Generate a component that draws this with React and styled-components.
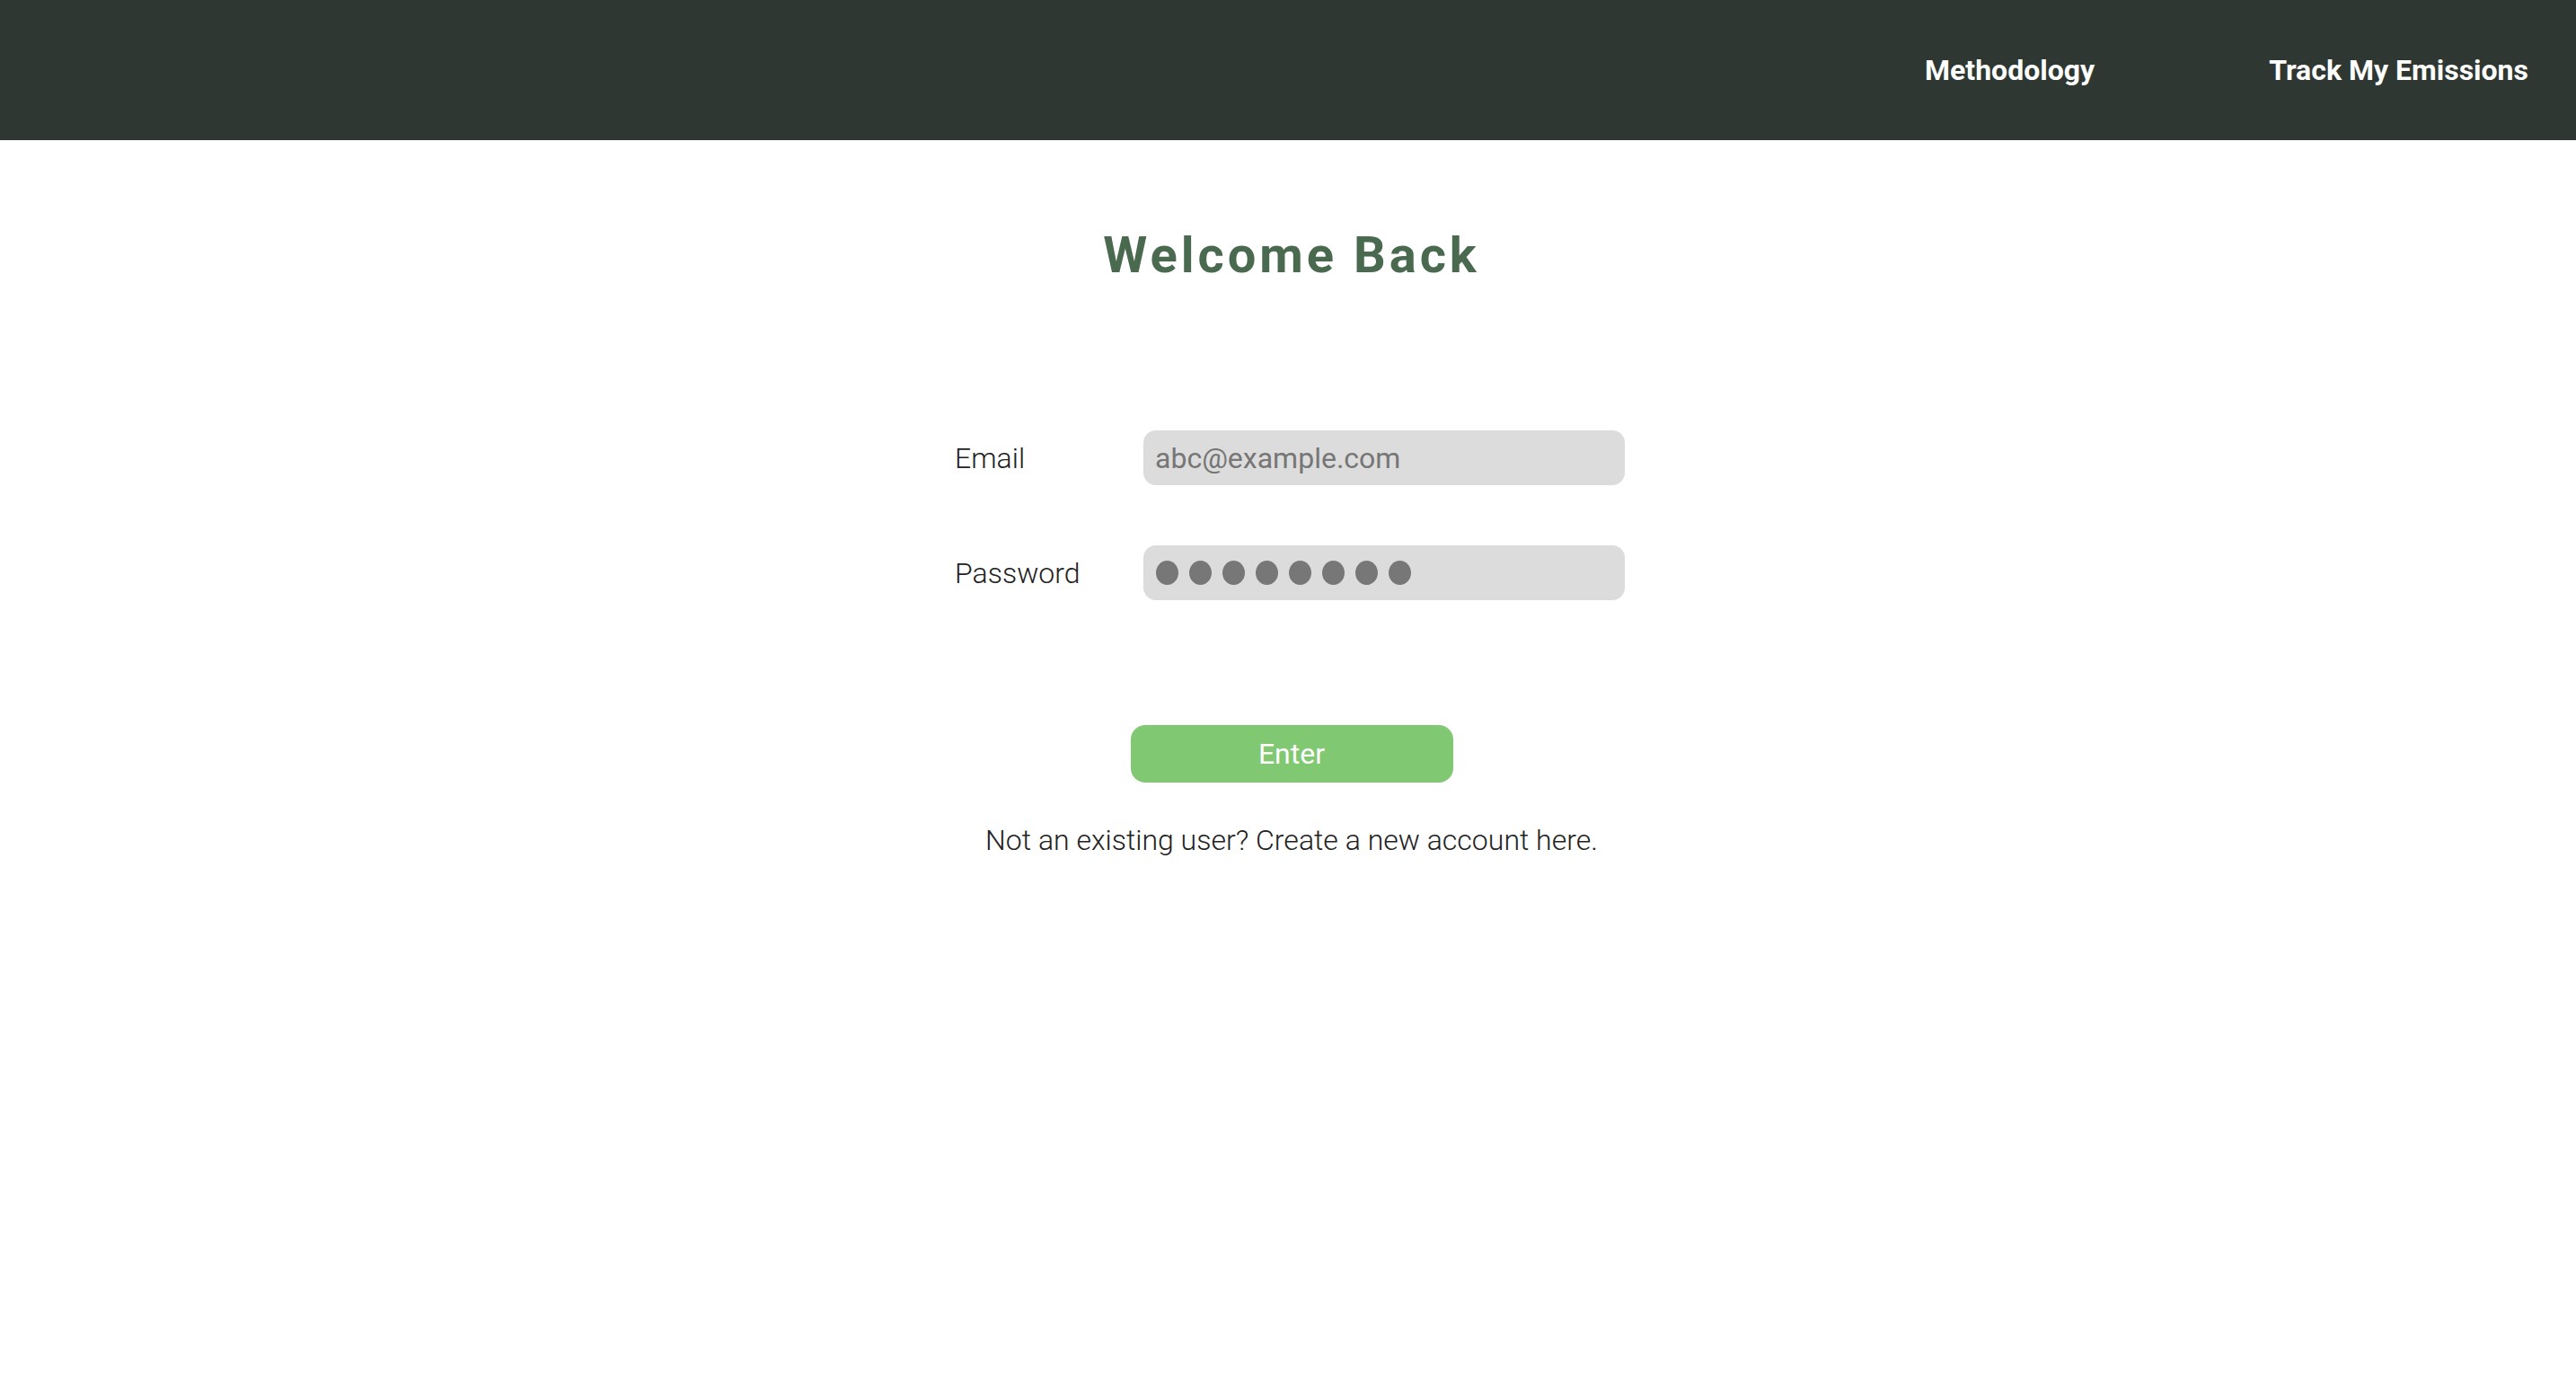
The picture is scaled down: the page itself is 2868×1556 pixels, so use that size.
import React from "react";
import styled, { createGlobalStyle } from "styled-components";

const GlobalStyle = createGlobalStyle`
    body {
        margin: 0;
        background: #fff;
        font-family: Roboto, "Liberation Sans", sans-serif;
    }
`;

function App() {
    const dots = Array.from({ length: 8 });

    return (
        <>
            <GlobalStyle />
            <Header>
                <NavLink>Methodology</NavLink>
                <NavLink>Track My Emissions</NavLink>
            </Header>
            <Main>
                <Title>Welcome Back</Title>
                <Form>
                    <Row>
                        <Label htmlFor='email'>Email</Label>
                        <Input id='email' type='email' placeholder='abc@example.com' />
                    </Row>
                    <Row>
                        <Label>Password</Label>
                        <FakeInput>
                            {dots.map((_, i) => (
                                <Dot key={i} />
                            ))}
                        </FakeInput>
                    </Row>
                </Form>
                <Button>Enter</Button>
                <Note>Not an existing user? Create a new account here.</Note>
            </Main>
        </>
    );
}

const Header = styled.header`
    height: 156px;
    background: #2e3732;
    display: flex;
    justify-content: flex-end;
    align-items: center;
    gap: 194px;
    padding-right: 53px;
`;

const NavLink = styled.a`
    color: #fff;
    font-size: 32px;
    font-weight: 700;
    cursor: pointer;
`;

const Main = styled.main`
    display: flex;
    flex-direction: column;
    align-items: center;
    padding-left: 8px;
`;

const Title = styled.h1`
    margin: 94px 0 0;
    font-size: 56px;
    line-height: 68px;
    font-weight: 700;
    letter-spacing: 4px;
    color: #4a6a4f;
`;

const Form = styled.div`
    margin: 161px 4px 0 0;
    display: flex;
    flex-direction: column;
    gap: 67px;
`;

const Row = styled.div`
    display: grid;
    grid-template-columns: 210px 536px;
    align-items: center;
`;

const Label = styled.label`
    font-size: 32px;
    font-weight: 300;
    color: #222;
`;

const Input = styled.input`
    box-sizing: border-box;
    height: 61px;
    width: 100%;
    border: none;
    outline: none;
    border-radius: 14px;
    background: #dcdcdc;
    padding: 0 13px;
    font-family: Roboto, "Liberation Sans", sans-serif;
    font-size: 32px;
    color: #333;

    &::placeholder {
        color: #767676;
    }
`;

const FakeInput = styled.div`
    box-sizing: border-box;
    height: 61px;
    border-radius: 14px;
    background: #dcdcdc;
    padding: 0 14px;
    display: flex;
    align-items: center;
    gap: 12px;
`;

const Dot = styled.span`
    width: 25px;
    height: 27px;
    border-radius: 50%;
    background: #777;
`;

const Button = styled.button`
    margin-top: 139px;
    width: 359px;
    height: 64px;
    border: none;
    border-radius: 16px;
    background: #80c872;
    color: #fff;
    font-family: Roboto, "Liberation Sans", sans-serif;
    font-size: 32px;
    cursor: pointer;
`;

const Note = styled.p`
    margin: 44px 0 0;
    font-size: 32px;
    line-height: 40px;
    font-weight: 300;
    color: #222;
`;

export default App;
